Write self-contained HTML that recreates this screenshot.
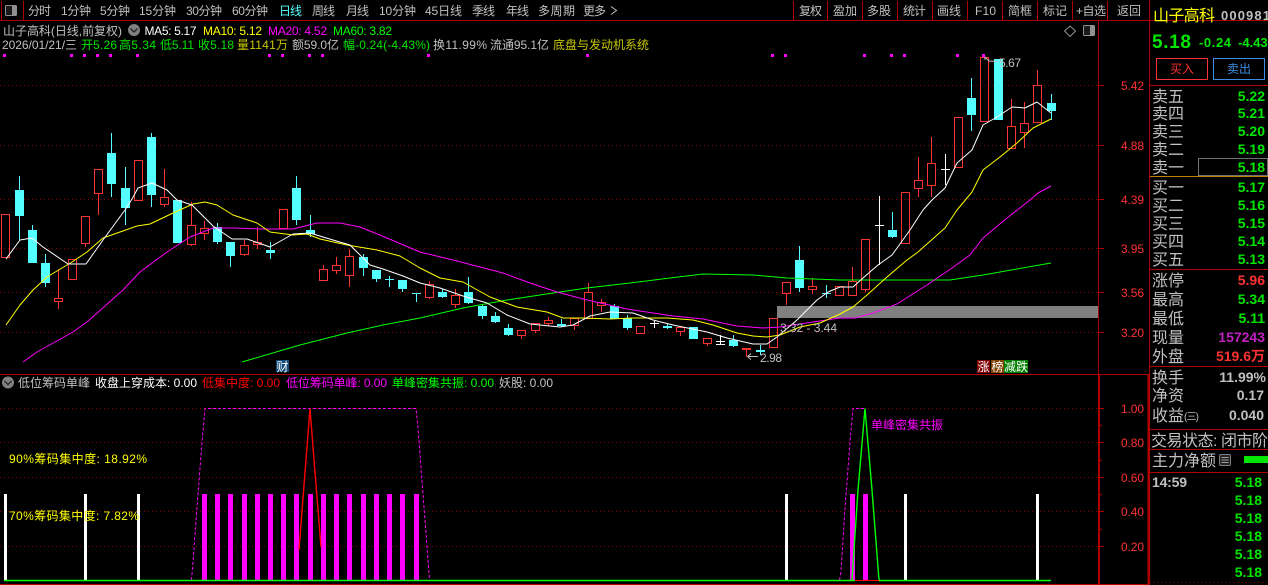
<!DOCTYPE html>
<html lang="zh-CN">
<head>
<meta charset="utf-8">
<title>山子高科</title>
<style>
html,body{margin:0;padding:0;background:#000;width:1268px;height:585px;overflow:hidden}
svg{display:block;position:absolute;left:0;top:0}
text{font-family:"Liberation Sans","WenQuanYi Zen Hei","Noto Sans CJK SC",sans-serif;font-size:12px;fill:#c0c0c0;white-space:pre}
.g{fill:#00e600}.y{fill:#ffff00}.m{fill:#ff00ff}.r{fill:#ff3232}.w{fill:#fff}.o{fill:#c8c800}.c{fill:#54ffff}
.L{font-size:16px}.V{font-size:14px;font-weight:bold;text-anchor:end}
</style>
</head>
<body>
<svg width="1268" height="585" viewBox="0 0 1268 585" xmlns="http://www.w3.org/2000/svg">
<rect width="1268" height="585" fill="#000"/>

<!-- grid -->
<g stroke="#800000" stroke-width="1" stroke-dasharray="1 3" fill="none" shape-rendering="crispEdges">
<path d="M0 85.5H1098M0 145.5H1098M0 199.5H1098M0 248.5H1098M0 292.5H1098M0 332.5H1098"/>
<path d="M0 408.5H1098M0 442.5H1098M0 477.5H1098M0 511.5H1098M0 546.5H1098"/>
<path d="M1150 582.5H1268"/>
</g>

<!-- frame lines -->
<g stroke="#b00000" fill="none" shape-rendering="crispEdges">
<path d="M0 20.5H1268M1.5 1V20M23.5 1V20M793.5 1V20M827.5 1V20M862.5 1V20M897.5 1V20M932.5 1V20M967.5 1V20M1002.5 1V20M1037.5 1V20M1072.5 1V20M1107.5 1V20"/>
<path d="M1098.5 20V374M1149.5 0V585"/>
<path d="M0 374.5H1098"/>
<path d="M1150 85.5H1268M1150 269.5H1268M1150 366.5H1268M1150 429.5H1268M1150 449.5H1268M1150 472.5H1268"/>
<path d="M1098 85.5H1104M1098 145.5H1104M1098 199.5H1104M1098 248.5H1104M1098 292.5H1104M1098 332.5H1104"/>
<path d="M1099 408.5H1104M1099 425.5H1102M1099 442.5H1104M1099 460.5H1102M1099 477.5H1104M1099 494.5H1102M1099 511.5H1104M1099 529.5H1102M1099 546.5H1104"/>
<path d="M1098 374.5H1149M0 584.5H1149" stroke-width="1"/>
<path d="M1099 374V585M1148.5 374V585" stroke-width="2"/>
</g>
<path d="M1150 176.5H1268" stroke="#c08000" shape-rendering="crispEdges"/>

<!-- toolbar icons -->
<rect x="5.5" y="5.5" width="11" height="10" rx="1" fill="#1a1a1a" stroke="#909090"/>
<rect x="12" y="6" width="4" height="9" fill="#909090"/>

<!-- toolbar text -->
<text x="28" y="15" textLength="23">分时</text>
<text x="61" y="15" textLength="30">1分钟</text>
<text x="100" y="15" textLength="30">5分钟</text>
<text x="139" y="15" textLength="37">15分钟</text>
<text x="186" y="15" textLength="36">30分钟</text>
<text x="232" y="15" textLength="36">60分钟</text>
<text x="279" y="15" textLength="23" class="c">日线</text>
<text x="312" y="15" textLength="23">周线</text>
<text x="346" y="15" textLength="23">月线</text>
<text x="379" y="15" textLength="37">10分钟</text>
<text x="425" y="15" textLength="37">45日线</text>
<text x="472" y="15" textLength="23">季线</text>
<text x="506" y="15" textLength="23">年线</text>
<text x="538" y="15" textLength="37">多周期</text>
<text x="583" y="15" textLength="23">更多</text>
<path d="M611 6.5L616.5 10.5L611 14.5" fill="none" stroke="#c0c0c0"/>
<text x="799" y="15" textLength="23">复权</text>
<text x="833" y="15" textLength="24">盈加</text>
<text x="867" y="15" textLength="24">多股</text>
<text x="903" y="15" textLength="23">统计</text>
<text x="937" y="15" textLength="24">画线</text>
<text x="975" y="15" textLength="21">F10</text>
<text x="1008" y="15" textLength="24">简框</text>
<text x="1043" y="15" textLength="24">标记</text>
<text x="1076" y="15" textLength="30">+自选</text>
<text x="1117" y="15" textLength="24">返回</text>

<!-- info lines -->
<text x="3" y="35" textLength="119">山子高科(日线,前复权)</text>
<circle cx="134" cy="30" r="6" fill="#808080"/>
<path d="M130.5 28.5L134 32L137.5 28.5" fill="none" stroke="#222" stroke-width="1.3"/>
<text x="144.5" y="35" textLength="52" class="w">MA5: 5.17</text>
<text x="203" y="35" textLength="59" class="y">MA10: 5.12</text>
<text x="268" y="35" textLength="59" class="m">MA20: 4.52</text>
<text x="333" y="35" textLength="59" style="fill:#00ff00">MA60: 3.82</text>

<text x="2" y="49" textLength="75">2026/01/21/三</text>
<text x="81" y="49" textLength="36" class="g">开5.26</text>
<text x="119" y="49" textLength="37" class="g">高5.34</text>
<text x="160" y="49" textLength="34" class="g">低5.11</text>
<text x="198" y="49" textLength="36" class="g">收5.18</text>
<text x="237" y="49" textLength="51" class="o">量1141万</text>
<text x="292" y="49" textLength="47">额59.0亿</text>
<text x="343" y="49" textLength="87" class="g">幅-0.24(-4.43%)</text>
<text x="433" y="49" textLength="54">换11.99%</text>
<text x="490" y="49" textLength="59">流通95.1亿</text>
<text x="553" y="49" textLength="96" class="o">底盘与发动机系统</text>

<!-- magenta markers -->
<path fill="#ff00ff" d="M3 54h3v3h-3zM70 54h3v3h-3zM83 54h3v3h-3zM96 54h3v3h-3zM109 54h3v3h-3zM136 54h3v3h-3zM268 54h3v3h-3zM281 54h3v3h-3zM308 54h3v3h-3zM321 54h3v3h-3zM427 54h3v3h-3zM586 54h3v3h-3zM771 54h3v3h-3zM784 54h3v3h-3zM863 54h3v3h-3zM890 54h3v3h-3zM903 54h3v3h-3zM956 54h3v3h-3zM982 54h3v3h-3z"/>

<!-- top-right chart icons -->
<path d="M1070 26L1075.5 31L1070 36.5L1064.5 31Z" fill="none" stroke="#909090"/>
<rect x="1083.5" y="25.5" width="11" height="10" rx="1" fill="#1a1a1a" stroke="#909090"/>
<rect x="1090" y="26" width="4" height="9" fill="#909090"/>

<!-- grey zone -->
<rect x="777" y="306" width="321" height="12" fill="#808080"/>

<!-- candles -->
<path fill="#54ffff" d="M15 190H24V216H15ZM28 230H37V263H28ZM41 263H50V283H41ZM107 153H116V184H107ZM121 188H130V208H121ZM147 137H156V195H147ZM173 200H182V243H173ZM213 227H222V242H213ZM226 242H235V256H226ZM266 250H275V253H266ZM292 188H301V220H292ZM306 230H315V234H306ZM359 257H368V268H359ZM372 270H381V279H372ZM385 279H394V280H385ZM398 280H407V289H398ZM412 293H421V294H412ZM438 292H447V297H438ZM464 292H473V303H464ZM478 306H487V316H478ZM491 316H500V322H491ZM504 328H513V335H504ZM557 324H566V326H557ZM610 306H619V319H610ZM623 318H632V328H623ZM663 326H672V328H663ZM689 327H698V339H689ZM729 340H738V346H729ZM756 350H765V352H756ZM795 260H804V288H795ZM822 293H831V294H822ZM888 230H897V237H888ZM967 98H976V115H967ZM994 59H1003V120H994ZM1047 103H1056V111H1047Z"/>
<path stroke="#54ffff" fill="none" shape-rendering="crispEdges" d="M19.5 176V240M32.5 225V230M45.5 254V287M111.5 133V197M125.5 167V225M151.5 133V207M217.5 223V244M230.5 242V267M270.5 242V259M296.5 176V225M310.5 215V237M363.5 254V276M376.5 270V282M389.5 276V287M402.5 280V292M416.5 293V302M442.5 289V298M468.5 277V304M482.5 304V319M495.5 312V323M508.5 324V336M561.5 319V327M614.5 304V319M627.5 315V330M667.5 324V329M733.5 335V347M760.5 345V355M799.5 246V292M826.5 285V298M892.5 212V238M971.5 78V131M1051.5 94V120"/>
<path stroke="#ff3232" fill="none" shape-rendering="crispEdges" d="M1.5 214.5H9.5V257.5H1.5ZM54.5 298.5H62.5V301.5H54.5ZM58.5 270V298M58.5 302V309M68.5 259.5H76.5V279.5H68.5ZM81.5 216.5H89.5V243.5H81.5ZM85.5 244V247M94.5 169.5H102.5V193.5H94.5ZM98.5 194V215M134.5 160.5H142.5V200.5H134.5ZM160.5 197.5H168.5V204.5H160.5ZM164.5 169V197M164.5 205V207M187.5 225.5H195.5V244.5H187.5ZM191.5 202V225M191.5 245V246M200.5 228.5H208.5V233.5H200.5ZM204.5 221V228M204.5 234V240M240.5 245.5H248.5V254.5H240.5ZM244.5 240V245M244.5 255V256M253.5 242.5H261.5V244.5H253.5ZM257.5 227V242M257.5 245V249M279.5 209.5H287.5V228.5H279.5ZM319.5 269.5H327.5V280.5H319.5ZM323.5 265V269M332.5 265.5H340.5V270.5H332.5ZM336.5 257V265M336.5 271V274M345.5 256.5H353.5V275.5H345.5ZM349.5 249V256M349.5 276V287M425.5 284.5H433.5V297.5H425.5ZM429.5 281V284M429.5 298V299M451.5 295.5H459.5V304.5H451.5ZM455.5 289V295M455.5 305V308M517.5 330.5H525.5V335.5H517.5ZM521.5 336V339M531.5 323.5H539.5V330.5H531.5ZM535.5 331V333M544.5 320.5H552.5V323.5H544.5ZM548.5 317V320M548.5 324V326M570.5 318.5H578.5V325.5H570.5ZM574.5 326V330M584.5 292.5H592.5V318.5H584.5ZM588.5 283V292M597.5 302.5H605.5V305.5H597.5ZM601.5 299V302M601.5 306V312M636.5 326.5H644.5V333.5H636.5ZM676.5 327.5H684.5V331.5H676.5ZM680.5 332V336M703.5 338.5H711.5V343.5H703.5ZM707.5 344V346M742 348.5H751M742 349.5H751M746.5 349V357M769.5 318.5H777.5V347.5H769.5ZM782.5 282.5H790.5V293.5H782.5ZM786.5 294V305M808.5 286.5H816.5V289.5H808.5ZM812.5 278V286M812.5 290V294M835.5 286.5H843.5V295.5H835.5ZM848.5 281.5H856.5V295.5H848.5ZM852.5 267V281M861.5 239.5H869.5V289.5H861.5ZM865.5 290V292M901.5 192.5H909.5V243.5H901.5ZM914.5 180.5H922.5V188.5H914.5ZM918.5 157V180M918.5 189V197M927.5 163.5H935.5V185.5H927.5ZM931.5 137V163M931.5 186V197M954.5 117.5H962.5V167.5H954.5ZM980.5 57.5H988.5V121.5H980.5ZM1007.5 126.5H1015.5V148.5H1007.5ZM1011.5 99V126M1020.5 123.5H1028.5V132.5H1020.5ZM1024.5 102V123M1024.5 133V148M1033.5 85.5H1041.5V122.5H1033.5ZM1037.5 70V85"/>
<path stroke="#ffffff" fill="none" shape-rendering="crispEdges" d="M650 323.5H659M654.5 321V328M716 341.5H725M720.5 335V344M716 344.5H725M875 225.5H884M879.5 196V265M941 169.5H950M945.5 154V185"/>

<!-- moving averages -->
<g fill="none" stroke-width="1" stroke-linejoin="round">
<polyline stroke="#00ff00" points="242,362 300,345 347,333 383,325 420,318 463,308 507,300 553,293 587,288 630,283 670,278 703,274 753,275 787,278 840,280 950,280 983,275 1051,263"/>
<polyline stroke="#ff00ff" points="23,362 37,352 73,332 87,322 123,290 140,272 167,252 190,237 213,228 233,228 263,229 293,229 317,223 340,223 360,227 387,238 420,252 453,260 503,273 530,283 557,292 587,300 627,309 673,316 703,319 737,326 763,328 780,327 813,322 840,318 855,318 873,313 897,304 927,285 952,268 970,255 983,238 1007,218 1030,200 1038,193 1051,186"/>
<polyline stroke="#ffff00" points="6,325 20,305 33,290 47,277 72,262 87,252 103,238 137,226 150,224 173,213 193,204 205,202 217,205 233,215 257,223 270,232 293,235 307,234 320,239 347,245 377,250 400,256 420,268 440,278 463,282 490,297 517,307 547,312 563,318 583,318 610,319 633,318 667,318 693,320 713,325 737,333 753,336 767,337 780,335 800,327 820,323 840,314 853,307 867,295 887,277 907,260 918,252 945,228 957,210 972,192 983,170 1000,157 1017,143 1033,128 1051,119"/>
<polyline stroke="#ffffff" points="6,259 20,240 32,238 43,247 68,264 86,264 103,240 125,210 132,199 138,188 152,183 167,190 177,200 192,205 213,226 232,239 247,239 270,247 293,234 310,233 333,240 350,245 370,265 383,269 403,276 420,283 440,288 463,296 487,303 507,315 530,324 560,327 573,325 590,316 610,312 633,313 653,320 673,325 707,332 727,338 753,344 767,344 777,337 797,320 817,300 828,292 840,287 853,287 863,278 878,265 892,255 910,230 923,210 932,200 945,188 957,163 972,150 983,125 997,117 1012,107 1025,108 1037,102 1051,113"/>
</g>

<!-- annotations -->
<path d="M985 57L989 61L998 61.5M985 57L985 60" fill="none" stroke="#c0c0c0"/>
<text x="999" y="67" textLength="22">5.67</text>
<text x="780" y="332" textLength="57">3.32 - 3.44</text>
<path d="M747.5 356.5H758M747.5 356.5L751 353.5M747.5 356.5L751 359.5" fill="none" stroke="#c0c0c0"/>
<text x="760" y="362" textLength="22">2.98</text>

<!-- badges -->
<rect x="276" y="360" width="13" height="12" fill="#104a78"/>
<text x="276.5" y="371" class="w">财</text>
<rect x="977" y="360" width="13" height="13" fill="#800000"/>
<rect x="991" y="360" width="13" height="13" fill="#804000"/>
<rect x="1004" y="360" width="24" height="13" fill="#008000"/>
<text x="977.5" y="371" class="w">涨</text>
<text x="991.5" y="371" class="w">榜</text>
<text x="1004" y="371" class="w" textLength="24">减跌</text>

<!-- axis labels -->
<g>
<text x="1121" y="90" textLength="23" class="r">5.42</text>
<text x="1121" y="150" textLength="23" class="r">4.88</text>
<text x="1121" y="204" textLength="23" class="r">4.39</text>
<text x="1121" y="253" textLength="23" class="r">3.95</text>
<text x="1121" y="297" textLength="23" class="r">3.56</text>
<text x="1121" y="337" textLength="23" class="r">3.20</text>
<text x="1121" y="413" textLength="23" class="r">1.00</text>
<text x="1121" y="447" textLength="23" class="r">0.80</text>
<text x="1121" y="482" textLength="23" class="r">0.60</text>
<text x="1121" y="516" textLength="23" class="r">0.40</text>
<text x="1121" y="551" textLength="23" class="r">0.20</text>
</g>

<!-- indicator header -->
<circle cx="8" cy="382.5" r="6" fill="#808080"/>
<path d="M4.5 381L8 384.5L11.5 381" fill="none" stroke="#222" stroke-width="1.3"/>
<text x="18" y="387" textLength="72">低位筹码单峰</text>
<text x="95" y="387" textLength="102" class="w">收盘上穿成本: 0.00</text>
<text x="202" y="387" textLength="78" style="fill:#ff0000">低集中度: 0.00</text>
<text x="286" y="387" textLength="101" class="m">低位筹码单峰: 0.00</text>
<text x="392" y="387" textLength="102" style="fill:#00ff00">单峰密集共振: 0.00</text>
<text x="499" y="387" textLength="54">妖股: 0.00</text>

<!-- indicator bars -->
<path fill="#ffffff" d="M4 494h3v86h-3zM84 494h3v86h-3zM137 494h3v86h-3zM785 494h3v86h-3zM904 494h3v86h-3zM1036 494h3v86h-3z"/>
<path fill="#ff00ff" d="M202 494h5v86h-5zM215 494h5v86h-5zM228 494h5v86h-5zM242 494h5v86h-5zM255 494h5v86h-5zM268 494h5v86h-5zM281 494h5v86h-5zM294 494h5v86h-5zM308 494h5v86h-5zM321 494h5v86h-5zM334 494h5v86h-5zM347 494h5v86h-5zM361 494h5v86h-5zM374 494h5v86h-5zM387 494h5v86h-5zM400 494h5v86h-5zM414 494h5v86h-5zM850 494h5v86h-5zM863 494h5v86h-5z"/>
<g fill="none">
<path stroke="#ff00ff" stroke-dasharray="3 2" d="M191.5 580L193 562L197 507L202 442L205 408.5H416L418 428L429.5 580"/>
<path stroke="#ff00ff" stroke-dasharray="3 2" d="M839.5 580L841 572L845 508L850 442L853 408.5H865"/>
<path stroke="#ff0000" stroke-width="1.4" d="M299 550L304 485L310 408.5L316 485L321 547"/>
<path stroke="#ff0000" d="M855 580.5H879"/>
<path stroke="#00ff00" stroke-width="1.4" d="M852 580L858 490L865 408.5L872 490L879 580"/>
<path stroke="#00ff00" stroke-width="1.5" d="M4 580.5H855M879 580.5H1051"/>
</g>
<text x="871" y="429" textLength="72" class="m">单峰密集共振</text>
<text x="9" y="463" textLength="138" class="y">90%筹码集中度: 18.92%</text>
<text x="9" y="520" textLength="130" class="y">70%筹码集中度: 7.82%</text>

<!-- right panel header -->
<text x="1153" y="21" textLength="62" class="y" style="font-size:16px">山子高科</text>
<text x="1221" y="20" textLength="49" style="font-size:13px;font-weight:bold;font-family:'Liberation Sans',sans-serif">000981</text>
<text x="1152" y="48" textLength="39" class="g" style="font-size:19px;font-weight:bold">5.18</text>
<text x="1199" y="47" textLength="32" class="g" style="font-size:13px;font-weight:bold">-0.24</text>
<text x="1238" y="47" class="g" style="font-size:13px;font-weight:bold">-4.43%</text>
<rect x="1156.5" y="58.5" width="51" height="21" fill="none" stroke="#ff3232"/>
<rect x="1213.5" y="58.5" width="51" height="21" fill="none" stroke="#3c8ee0"/>
<text x="1170" y="73" textLength="24" class="r">买入</text>
<text x="1227" y="73" textLength="24" style="fill:#3c8ee0">卖出</text>

<!-- order book -->
<rect x="1198.5" y="158.5" width="69" height="17" fill="none" stroke="#707070"/>
<text class="L" x="1152" y="102">卖五</text>
<text class="L" x="1152" y="119">卖四</text>
<text class="L" x="1152" y="137">卖三</text>
<text class="L" x="1152" y="155">卖二</text>
<text class="L" x="1152" y="173">卖一</text>
<text class="L" x="1152" y="193">买一</text>
<text class="L" x="1152" y="211">买二</text>
<text class="L" x="1152" y="229">买三</text>
<text class="L" x="1152" y="247">买四</text>
<text class="L" x="1152" y="265">买五</text>
<text class="L" x="1152" y="286">涨停</text>
<text class="L" x="1152" y="305">最高</text>
<text class="L" x="1152" y="324">最低</text>
<text class="L" x="1152" y="343">现量</text>
<text class="L" x="1152" y="362">外盘</text>
<text class="L" x="1152" y="383">换手</text>
<text class="L" x="1152" y="401">净资</text>
<text class="L" x="1152" y="421">收益</text>
<text x="1184" y="420" textLength="15" style="font-size:10px">(三)</text>
<text class="L" x="1151" y="446" textLength="117">交易状态: 闭市阶</text>
<text class="L" x="1152" y="466">主力净额</text>

<g>
<text class="V g" x="1265" y="101">5.22</text>
<text class="V g" x="1265" y="118">5.21</text>
<text class="V g" x="1265" y="136">5.20</text>
<text class="V g" x="1265" y="154">5.19</text>
<text class="V g" x="1265" y="172">5.18</text>
<text class="V g" x="1265" y="192">5.17</text>
<text class="V g" x="1265" y="210">5.16</text>
<text class="V g" x="1265" y="228">5.15</text>
<text class="V g" x="1265" y="246">5.14</text>
<text class="V g" x="1265" y="264">5.13</text>
<text class="V r" x="1265" y="285">5.96</text>
<text class="V g" x="1265" y="304">5.34</text>
<text class="V g" x="1265" y="323">5.11</text>
<text class="V" x="1265" y="342" style="fill:#c020c0">157243</text>
<text class="V r" x="1265" y="361">519.6万</text>
<text class="V" x="1266" y="382">11.99%</text>
<text class="V" x="1264" y="400">0.17</text>
<text class="V" x="1264" y="420">0.040</text>
</g>

<!-- fund icon -->
<rect x="1219.5" y="454.5" width="11" height="11" rx="1.5" fill="#222" stroke="#808080"/>
<path d="M1221.5 457.5H1228.5M1221.5 460H1228.5M1221.5 462.5H1228.5" stroke="#a0a0a0"/>
<rect x="1244" y="456" width="24" height="7" fill="#00e600"/>

<!-- ticks -->
<text x="1152" y="487" textLength="35" style="font-size:14px;font-weight:bold">14:59</text>
<text class="V g" x="1262" y="487">5.18</text>
<text class="V g" x="1262" y="505">5.18</text>
<text class="V g" x="1262" y="523">5.18</text>
<text class="V g" x="1262" y="541">5.18</text>
<text class="V g" x="1262" y="559">5.18</text>
<text class="V g" x="1262" y="577">5.18</text>
</svg>
</body>
</html>
